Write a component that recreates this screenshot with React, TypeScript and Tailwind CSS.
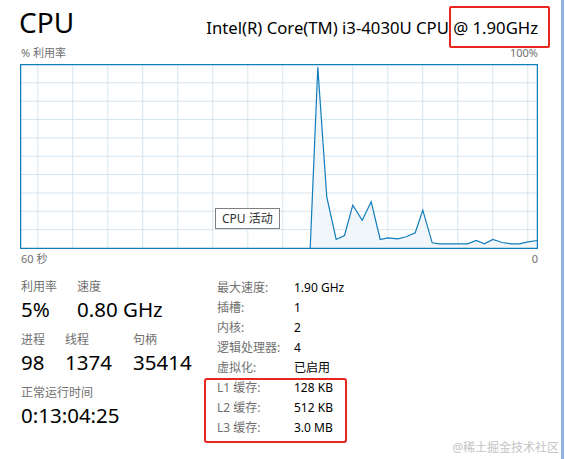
const pts: [number, number][] = [
  [0, 184], [289.7, 184], [297.3, 2.7], [306.3, 132.7], [315.7, 175], [324, 171],
  [332.3, 140.7], [341.7, 155.7], [350.7, 137.3], [359.7, 175], [367.3, 173.3],
  [377.3, 174.3], [385.7, 172.3], [394.7, 168.3], [402.3, 145.7], [411.7, 178.3],
  [419, 179.3], [447.3, 179.3], [455.7, 176], [464, 179.3], [472.3, 175],
  [481.7, 178], [490.7, 179.3], [499, 179.3], [507.3, 177.3], [517, 176],
];

function Chart() {
  const line = pts.map(([x, y]) => `${x},${y}`).join(" ");
  const area = `0,184 ${line} 517,184`;
  const vx = Array.from({ length: 15 }, (_, k) => 17.3 + 35 * k);
  const hy = Array.from({ length: 9 }, (_, k) => 18.35 * (k + 1));
  return (
    <svg width="518" height="185" viewBox="-0.5 -0.5 518 185" className="block">
      {vx.map((x) => (
        <line key={x} x1={x} y1={0} x2={x} y2={184} stroke="#d6e4ee" strokeWidth="1" />
      ))}
      {hy.map((y) => (
        <line key={y} x1={0} y1={y} x2={517} y2={y} stroke="#d6e4ee" strokeWidth="1" />
      ))}
      <polygon points={area} fill="#f1f6fa" />
      <polyline points={line} fill="none" stroke="#117dbb" strokeWidth="1.2" />
      <rect x="0" y="0" width="517" height="184" fill="none" stroke="#117dbb" strokeWidth="1.5" />
    </svg>
  );
}

type Stat = { label: string; value: string; w: string };

function StatRow({ items }: { items: Stat[] }) {
  return (
    <div className="flex">
      {items.map((s) => (
        <div key={s.label} className={s.w}>
          <div className="text-[12px] leading-[16px] text-[#707070]">{s.label}</div>
          <div className="mt-[2px] text-[20.5px] leading-[24px] text-black">{s.value}</div>
        </div>
      ))}
    </div>
  );
}

const specs = [
  ["最大速度:", "1.90 GHz"],
  ["插槽:", "1"],
  ["内核:", "2"],
  ["逻辑处理器:", "4"],
  ["虚拟化:", "已启用"],
  ["L1 缓存:", "128 KB"],
  ["L2 缓存:", "512 KB"],
  ["L3 缓存:", "3.0 MB"],
];

export default function App() {
  return (
    <div
      className="w-[565px] h-[459px] bg-white overflow-hidden"
      style={{ fontFamily: '"Noto Sans", "Noto Sans CJK SC", sans-serif' }}
    >
      <div className="relative w-[564px] h-[459px] border-r-[3px] border-[#8fb2de]">
        {/* header */}
        <div className="flex items-end justify-between w-[538px] pl-[19px] pt-[3px]">
          <div className="text-[28px] leading-[38px] text-black">CPU</div>
          <div className="relative text-[16.7px] leading-[24px] text-black mb-[1.5px]">
            Intel(R) Core(TM) i3-4030U CPU @ 1.90GHz
            <div className="absolute right-[-12px] top-[-10px] w-[101px] h-[42px] border-2 border-[#e8261d] rounded-[2px]" />
          </div>
        </div>

        <div className="flex justify-between w-[538px] pl-[21px] mt-[4px] text-[11px] leading-[16px] text-[#707070]">
          <span>% 利用率</span>
          <span>100%</span>
        </div>

        <div className="ml-[20px] mt-[3px]">
          <Chart />
        </div>

        <div className="flex justify-between w-[538px] pl-[21px] mt-[2px] text-[11px] leading-[16px] text-[#707070]">
          <span>60 秒</span>
          <span>0</span>
        </div>

        <div className="absolute left-[215px] top-[208px] border border-[#808080] bg-white px-[6px] text-[12px] leading-[19px] text-[#333]">
          CPU 活动
        </div>

        {/* bottom stats */}
        <div className="flex mt-[10px] pl-[21px]">
          <div className="w-[196px] flex flex-col gap-[11px] pt-[2px]">
            <StatRow
              items={[
                { label: "利用率", value: "5%", w: "w-[56px]" },
                { label: "速度", value: "0.80 GHz", w: "w-[100px]" },
              ]}
            />
            <StatRow
              items={[
                { label: "进程", value: "98", w: "w-[44px]" },
                { label: "线程", value: "1374", w: "w-[68px]" },
                { label: "句柄", value: "35414", w: "w-[70px]" },
              ]}
            />
            <StatRow items={[{ label: "正常运行时间", value: "0:13:04:25", w: "w-[150px]" }]} />
          </div>

          <div className="relative pt-[1px]">
            {specs.map(([k, v]) => (
              <div key={k} className="flex text-[12px] leading-[20px]">
                <span className="w-[77px] text-[#707070]">{k}</span>
                <span className="text-black">{v}</span>
              </div>
            ))}
            <div className="absolute left-[-13px] top-[101px] w-[143px] h-[65px] border-2 border-[#e8261d] rounded-[3px]" />
          </div>
        </div>

        <div className="absolute right-[2px] bottom-[2px] text-[12px] leading-[18px] text-[#c4c4c4]">
          @稀土掘金技术社区
        </div>
      </div>
    </div>
  );
}
